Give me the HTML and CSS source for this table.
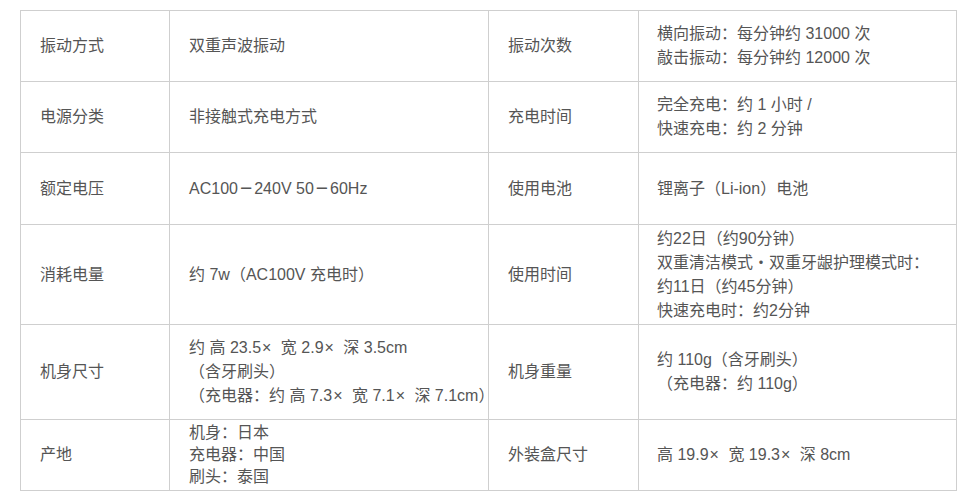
FILE: index.html
```html
<!DOCTYPE html>
<html lang="zh-CN">
<head>
<meta charset="utf-8">
<title>规格</title>
<link rel="stylesheet" href="styles.css">
</head>
<body>
<table class="spec">
  <colgroup>
    <col class="c-label">
    <col class="c-value">
    <col class="c-label2">
    <col class="c-value2">
  </colgroup>
  <tr class="r-71">
    <td>振动方式</td>
    <td>双重声波振动</td>
    <td>振动次数</td>
    <td>横向振动：每分钟约 31000 次<br>敲击振动：每分钟约 12000 次</td>
  </tr>
  <tr class="r-71">
    <td>电源分类</td>
    <td>非接触式充电方式</td>
    <td>充电时间</td>
    <td>完全充电：约 1 小时 /<br>快速充电：约 2 分钟</td>
  </tr>
  <tr class="r-72">
    <td>额定电压</td>
    <td>AC100<span class="dash">−</span>240V 50<span class="dash">−</span>60Hz</td>
    <td>使用电池</td>
    <td>锂离子（Li-ion）电池</td>
  </tr>
  <tr class="r-100">
    <td>消耗电量</td>
    <td>约 7w（AC100V 充电时）</td>
    <td>使用时间</td>
    <td>约22日（约90分钟）<br>双重清洁模式・双重牙龈护理模式时：<br>约11日（约45分钟）<br>快速充电时：约2分钟</td>
  </tr>
  <tr class="r-95">
    <td>机身尺寸</td>
    <td>约 高 23.5<span class="x">×</span> 宽 2.9<span class="x">×</span> 深 3.5cm<br>（含牙刷头）<br>（充电器：约 高 7.3<span class="x">×</span> 宽 7.1<span class="x">×</span> 深 7.1cm）</td>
    <td>机身重量</td>
    <td>约 110g（含牙刷头）<br>（充电器：约 110g）</td>
  </tr>
  <tr class="r-71 tight">
    <td>产地</td>
    <td>机身：日本<br>充电器：中国<br>刷头：泰国</td>
    <td>外装盒尺寸</td>
    <td>高 19.9<span class="x">×</span> 宽 19.3<span class="x">×</span> 深 8cm</td>
  </tr>
</table>
</body>
</html>
```
FILE: styles.css
```css
html, body {
  margin: 0;
  padding: 0;
  background: #ffffff;
}

body {
  padding: 10px 0 0 20px;
  font-family: "Liberation Sans", "Noto Sans CJK SC", sans-serif;
  font-size: 16px;
  color: #555555;
}

.spec {
  border-collapse: collapse;
  table-layout: fixed;
  width: 936px;
}

.c-label { width: 149px; }
.c-value { width: 319px; }
.c-label2 { width: 150px; }
.c-value2 { width: 318px; }

.spec td {
  border: 1px solid #cfcfcf;
  padding: 0 0 0 19px;
  vertical-align: middle;
  line-height: 24px;
  white-space: nowrap;
}

.spec td:nth-child(4) {
  padding-left: 18px;
}

.r-71 { height: 71px; }
.r-72 { height: 72px; }
.r-100 { height: 100px; }
.r-95 { height: 95px; }

.tight td {
  line-height: 22px;
}

.x {
  padding: 0 5px 0 1px;
}

.dash {
  font-size: 21px;
  line-height: 1;
  padding: 0 2px;
  vertical-align: -1px;
}
```
